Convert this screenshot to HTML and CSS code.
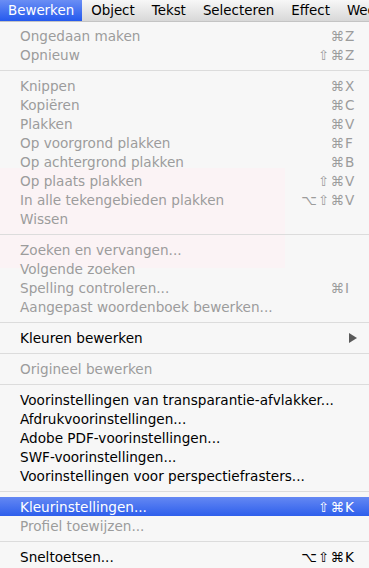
FILE: index.html
```html
<!DOCTYPE html>
<html lang="nl">
<head>
  <meta charset="UTF-8">
  <title>Bewerken</title>
  <link rel="stylesheet" href="styles.css">
</head>
<body>
<div class="menubar">
  <span class="title active">Bewerken</span>
  <span class="title">Object</span>
  <span class="title">Tekst</span>
  <span class="title">Selecteren</span>
  <span class="title">Effect</span>
  <span class="title">Weergave</span>
</div>

<ul class="menu">
  <li class="item off"><span>Ongedaan maken</span><span class="keys">&#8984;<b>Z</b></span></li>
  <li class="item off"><span>Opnieuw</span><span class="keys">&#8679;&#8984;<b>Z</b></span></li>
  <li class="sep"></li>
  <li class="item off"><span>Knippen</span><span class="keys">&#8984;<b>X</b></span></li>
  <li class="item off"><span>Kopiëren</span><span class="keys">&#8984;<b>C</b></span></li>
  <li class="item off"><span>Plakken</span><span class="keys">&#8984;<b>V</b></span></li>
  <li class="item off"><span>Op voorgrond plakken</span><span class="keys">&#8984;<b>F</b></span></li>
  <li class="item off"><span>Op achtergrond plakken</span><span class="keys">&#8984;<b>B</b></span></li>
  <li class="item off"><span>Op plaats plakken</span><span class="keys">&#8679;&#8984;<b>V</b></span></li>
  <li class="item off"><span>In alle tekengebieden plakken</span><span class="keys">&#8997;&#8679;&#8984;<b>V</b></span></li>
  <li class="item off"><span>Wissen</span></li>
  <li class="sep"></li>
  <li class="item off"><span>Zoeken en vervangen...</span></li>
  <li class="item off"><span>Volgende zoeken</span></li>
  <li class="item off"><span>Spelling controleren...</span><span class="keys">&#8984;<b>I</b></span></li>
  <li class="item off"><span>Aangepast woordenboek bewerken...</span></li>
  <li class="sep"></li>
  <li class="item"><span>Kleuren bewerken</span><span class="arrow"></span></li>
  <li class="sep"></li>
  <li class="item off"><span>Origineel bewerken</span></li>
  <li class="sep"></li>
  <li class="item"><span>Voorinstellingen van transparantie-afvlakker...</span></li>
  <li class="item"><span>Afdrukvoorinstellingen...</span></li>
  <li class="item"><span>Adobe PDF-voorinstellingen...</span></li>
  <li class="item"><span>SWF-voorinstellingen...</span></li>
  <li class="item"><span>Voorinstellingen voor perspectiefrasters...</span></li>
  <li class="sep"></li>
  <li class="item current"><span>Kleurinstellingen...</span><span class="keys">&#8679;&#8984;<b>K</b></span></li>
  <li class="item off"><span>Profiel toewijzen...</span></li>
  <li class="sep"></li>
  <li class="item"><span>Sneltoetsen...</span><span class="keys">&#8997;&#8679;&#8984;<b>K</b></span></li>
</ul>
</body>
</html>
```

FILE: styles.css
```css
body, ul, li {
  margin: 0;
  padding: 0;
  list-style: none;
}

body {
  width: 369px;
  height: 568px;
  overflow: hidden;
  font-family: "DejaVu Sans", "Liberation Sans", sans-serif;
  font-size: 13.6px;
  background: #f7f7f7;
}

.menubar {
  display: flex;
  height: 21px;
  line-height: 21px;
  border-bottom: 1px solid #c4c4c4;
  background: linear-gradient(#f7f7f7, #d8d8d8);
  white-space: nowrap;
  overflow: hidden;
  font-size: 13.4px;
}

.menubar .title {
  flex-shrink: 0;
  padding: 0 8px;
  margin-right: 1px;
  color: #000;
}

.menubar .title.active {
  color: #fff;
  background: linear-gradient(#6a8ef4, #2459ee);
}

.menu {
  padding-top: 4px;
  background-color: #f7f7f7;
  background-image: linear-gradient(#fbf3f5, #fbf3f5);
  background-size: 285px 100px;
  background-position: 0 146px;
  background-repeat: no-repeat;
}

.item {
  display: flex;
  justify-content: space-between;
  align-items: center;
  height: 19px;
  padding: 0 11px 0 20px;
  color: #000;
  white-space: nowrap;
}

.item.off {
  color: #9c9c9c;
}

.item.current {
  color: #fff;
  background: linear-gradient(#6488f3, #2e5fec);
}

.keys {
  display: flex;
  letter-spacing: 1px;
}

.keys b {
  font-weight: normal;
  width: 13px;
  text-align: left;
}

.arrow {
  width: 0;
  height: 0;
  margin-right: 1px;
  border-top: 5px solid transparent;
  border-bottom: 5px solid transparent;
  border-left: 8px solid #5a5a5a;
}

.sep {
  height: 1px;
  margin: 6px 0 5px;
  background: #dcdcdc;
}
```
